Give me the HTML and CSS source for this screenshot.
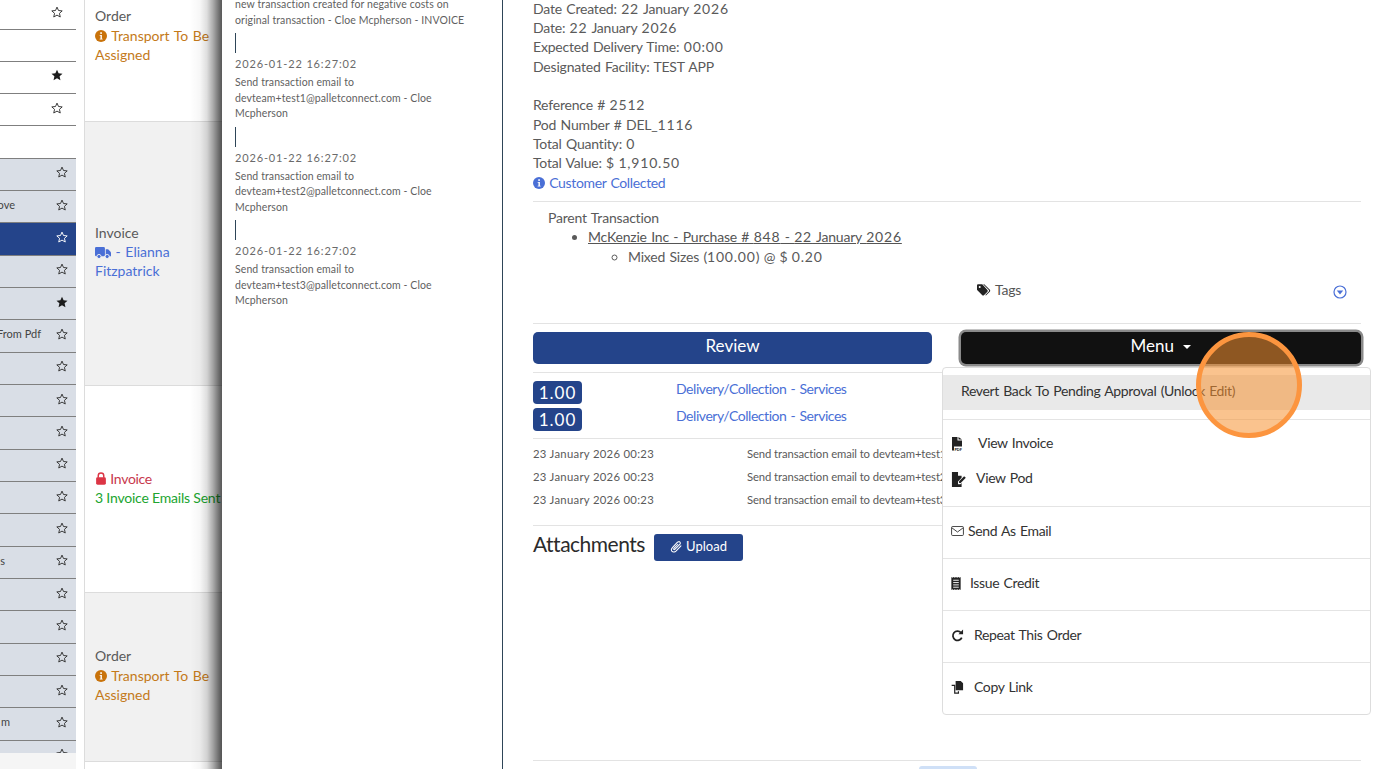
FILE: index.html
```html
<!DOCTYPE html>
<html lang="en">
<head>
<meta charset="utf-8">
<title>Transaction</title>
<link rel="stylesheet" href="styles.css">
</head>
<body>
<svg class="defs" aria-hidden="true">
  <symbol id="star" viewBox="0 0 24 24"><polygon points="12,2.2 15,9 22.4,9.8 16.9,14.7 18.5,22 12,18.2 5.5,22 7.1,14.7 1.6,9.8 9,9" fill="none" stroke="currentColor" stroke-width="1.9" stroke-linejoin="round"/></symbol>
  <symbol id="star-solid" viewBox="0 0 24 24"><polygon points="12,1.5 15.2,8.6 23,9.5 17.2,14.7 18.9,22.5 12,18.5 5.1,22.5 6.8,14.7 1,9.5 8.8,8.6" fill="currentColor"/></symbol>
  <symbol id="info" viewBox="0 0 16 16"><circle cx="8" cy="8" r="8" fill="currentColor"/><rect x="7" y="3" width="2.2" height="2.2" fill="#fff"/><path d="M6.2 6.6h3v5h1v1.2H6.2v-1.2h1.1V7.8H6.2z" fill="#fff"/></symbol>
</svg>

<aside class="list">
  <div class="list-inner">
    <div class="row row-plain"><svg class="star"><use href="#star"/></svg></div>
    <div class="row row-plain"></div>
    <div class="row row-plain"><svg class="star star-dark"><use href="#star-solid"/></svg></div>
    <div class="row row-plain"><svg class="star"><use href="#star"/></svg></div>
    <div class="row row-plain"></div>
    <div class="row row-grey"><svg class="star"><use href="#star"/></svg></div>
    <div class="row row-grey"><span class="row-text end-ove">ove</span><svg class="star"><use href="#star"/></svg></div>
    <div class="row row-grey row-active"><svg class="star"><use href="#star"/></svg></div>
    <div class="row row-grey"><svg class="star"><use href="#star"/></svg></div>
    <div class="row row-grey"><svg class="star star-dark"><use href="#star-solid"/></svg></div>
    <div class="row row-grey"><span class="row-text end-pdf">From Pdf</span><svg class="star"><use href="#star"/></svg></div>
    <div class="row row-grey"><svg class="star"><use href="#star"/></svg></div>
    <div class="row row-grey"><svg class="star"><use href="#star"/></svg></div>
    <div class="row row-grey"><svg class="star"><use href="#star"/></svg></div>
    <div class="row row-grey"><svg class="star"><use href="#star"/></svg></div>
    <div class="row row-grey"><svg class="star"><use href="#star"/></svg></div>
    <div class="row row-grey"><svg class="star"><use href="#star"/></svg></div>
    <div class="row row-grey"><span class="row-text end-s">s</span><svg class="star"><use href="#star"/></svg></div>
    <div class="row row-grey"><svg class="star"><use href="#star"/></svg></div>
    <div class="row row-grey"><svg class="star"><use href="#star"/></svg></div>
    <div class="row row-grey"><svg class="star"><use href="#star"/></svg></div>
    <div class="row row-grey"><svg class="star"><use href="#star"/></svg></div>
    <div class="row row-grey"><span class="row-text end-m">m</span><svg class="star"><use href="#star"/></svg></div>
    <div class="row row-grey"><svg class="star"><use href="#star"/></svg></div>
  </div>
  <div class="list-foot"></div>
</aside>

<section class="types">
  <div class="type type-a">
    <div>Order</div>
    <div class="orange"><svg class="ico"><use href="#info"/></svg> Transport To Be Assigned</div>
  </div>
  <div class="type type-b alt">
    <div>Invoice</div>
    <div class="blue"><svg class="ico-truck" viewBox="0 0 20 16"><rect x="0" y="1" width="12.4" height="11.6" rx="1.6" fill="currentColor"/><path d="M13.4 4h3l3.6 3.8V12.600h-6.600z" fill="currentColor"/><circle cx="5" cy="13" r="2.600" fill="currentColor" stroke="#f1f1f1" stroke-width="1.200"/><circle cx="15.200" cy="13" r="2.600" fill="currentColor" stroke="#f1f1f1" stroke-width="1.200"/></svg> - Elianna Fitzpatrick</div>
  </div>
  <div class="type type-c">
    <div class="red"><svg class="ico-lock" viewBox="0 0 14 16"><rect x="1" y="6.600" width="12" height="9" rx="1.800" fill="currentColor"/><path d="M3.600 7V4.600a3.400 3.400 0 0 1 6.800 0V7" fill="none" stroke="currentColor" stroke-width="1.800"/></svg> Invoice</div>
    <div class="green nowrap">3 Invoice Emails Sent</div>
  </div>
  <div class="type type-d alt">
    <div>Order</div>
    <div class="orange"><svg class="ico"><use href="#info"/></svg> Transport To Be Assigned</div>
  </div>
</section>

<section class="history">
  <p class="note">new transaction created for negative costs on original transaction - Cloe Mcpherson - INVOICE</p>
  <div class="tick"></div>
  <div class="stamp">2026-01-22 16:27:02</div>
  <p class="note">Send transaction email to devteam+test1@palletconnect.com - Cloe Mcpherson</p>
  <div class="tick"></div>
  <div class="stamp">2026-01-22 16:27:02</div>
  <p class="note">Send transaction email to devteam+test2@palletconnect.com - Cloe Mcpherson</p>
  <div class="tick"></div>
  <div class="stamp">2026-01-22 16:27:02</div>
  <p class="note">Send transaction email to devteam+test3@palletconnect.com - Cloe Mcpherson</p>
</section>

<main class="detail">
  <div class="facts">
    <div>Date Created: <span class="n">22</span> January <span class="n">2026</span></div>
    <div>Date: <span class="n">22</span> January <span class="n">2026</span></div>
    <div>Expected Delivery Time: <span class="n">00:00</span></div>
    <div>Designated Facility: TEST APP</div>
    <div class="blank"></div>
    <div>Reference # <span class="n">2512</span></div>
    <div>Pod Number # DEL_<span class="n">1116</span></div>
    <div>Total Quantity: <span class="n">0</span></div>
    <div>Total Value: $ <span class="n">1,910.50</span></div>
    <div class="blue tight"><svg class="ico"><use href="#info"/></svg> Customer Collected</div>
  </div>
  <div class="rule rule-facts"></div>
  <div class="parent">
    <div>Parent Transaction</div>
    <ul class="parent-list">
      <li><a class="parent-link">McKenzie Inc - Purchase # <span class="n">848</span> - <span class="n">22</span> January <span class="n">2026</span></a>
        <ul class="parent-sub"><li>Mixed Sizes (<span class="n">100.00</span>) @ $ <span class="n">0.20</span></li></ul>
      </li>
    </ul>
  </div>
  <div class="tags">
    <span class="tags-label"><svg class="ico-tags" viewBox="0 0 18 15"><path d="M0 1.600v5.200c0 .4.200.8.500 1.100l6.300 6.300c.600.600 1.500.600 2.100 0l4.500-4.500c.600-.600.600-1.500 0-2.100L7.100.500C6.800.200 6.400 0 6 0H1.600C.700 0 0 .700 0 1.600zM3.500 2.200a1.300 1.300 0 1 1 0 2.600 1.300 1.300 0 0 1 0-2.600z" fill="#222" fill-rule="evenodd"/><path d="M9.300 0l6.900 6.900c1 1 1 1.900.2 2.800l-4.900 4.900-.8-.8 4.500-4.500c.5-.6.500-1.100 0-1.700L7.900 0z" fill="#222"/></svg> Tags</span>
    <svg class="ico-chev" viewBox="0 0 14 14"><circle cx="7" cy="7" r="6" fill="none" stroke="currentColor" stroke-width="1.200"/><path d="M3.800 5.600h6.400L7 9.400z" fill="currentColor"/></svg>
  </div>
  <div class="rule rule-tags"></div>
  <div class="actions">
    <button class="btn btn-review">Review</button>
    <button class="btn btn-menu">Menu <span class="caret"></span></button>
  </div>
  <div class="rule rule-actions"></div>
  <div class="lines">
    <div class="line"><span class="badge">1.00</span><a class="blue link">Delivery/Collection - Services</a></div>
    <div class="line"><span class="badge">1.00</span><a class="blue link">Delivery/Collection - Services</a></div>
  </div>
  <div class="rule rule-lines"></div>
  <div class="logs">
    <div class="log"><span>23 January 2026 00:23</span><span class="log-msg">Send transaction email to devteam+test1@palletconnect.com</span></div>
    <div class="log"><span>23 January 2026 00:23</span><span class="log-msg">Send transaction email to devteam+test2@palletconnect.com</span></div>
    <div class="log"><span>23 January 2026 00:23</span><span class="log-msg">Send transaction email to devteam+test3@palletconnect.com</span></div>
  </div>
  <div class="rule rule-logs"></div>
  <div class="attach">
    <h2 class="attach-title">Attachments</h2>
    <button class="btn-upload"><svg class="ico-clip" viewBox="0 0 14 14"><path d="M11.800 6.300 6.700 11.700c-1.500 1.500-3.500 1.600-4.500.6s-.8-2.900.6-4.400l5-5.300c1-1 2.200-1.100 2.900-.4s.6 1.900-.4 2.900L5.500 9.900c-.5.500-1.100.6-1.400.3s-.2-.9.300-1.400l4-4.200" fill="none" stroke="#fff" stroke-width="1.100" stroke-linecap="round"/></svg> Upload</button>
  </div>
  <div class="rule rule-end"></div>
  <div class="pill"></div>

  <nav class="menu">
    <div class="menu-top"><div class="menu-item menu-hl">Revert Back To Pending Approval (Unlock Edit)</div></div>
    <div class="menu-sec menu-view">
      <div class="menu-item"><svg class="mi mi-pdf" viewBox="0 0 12 14"><path d="M1 0h5.500v3.500H11v6H1z" fill="#222"/><path d="M7.500 0 11 2.500H7.500z" fill="#222"/><path d="M1 9h2v4.500H1z" fill="#222"/><text x="3.400" y="13.500" class="pdf-mark">PDF</text></svg><span>View Invoice</span></div>
      <div class="menu-item"><svg class="mi mi-sign" viewBox="0 0 16 16"><path d="M1 0h6.500v4h3.800v2L7.500 10v3H10l1.300-1.300V16H1z" fill="#222" /><path d="M8.600 9.800 14 4.400l1.800 1.800-5.400 5.400H8.600z" fill="#222"/></svg><span>View Pod</span></div>
    </div>
    <div class="menu-sec"><div class="menu-item"><svg class="mi mi-mail" viewBox="0 0 14 11"><rect x=".5" y=".5" width="13" height="10" rx="1.200" fill="none" stroke="#333" stroke-width="1"/><path d="M.8 2 7 6.600 13.200 2" fill="none" stroke="#333" stroke-width="1"/></svg><span>Send As Email</span></div></div>
    <div class="menu-sec"><div class="menu-item"><svg class="mi mi-rec" viewBox="0 0 10 14"><path d="M0 0l1.200.8L2.500 0l1.200.8L5 0l1.300.8L7.500 0l1.300.8L10 0v14l-1.200-.8-1.300.8-1.200-.8L5 14l-1.300-.8-1.200.8-1.300-.8L0 14z" fill="#222"/><path d="M2 3.500h6M2 6h6M2 8.500h6M2 11h6" stroke="#fff" stroke-width="1"/></svg><span>Issue Credit</span></div></div>
    <div class="menu-sec"><div class="menu-item"><svg class="mi mi-redo" viewBox="0 0 14 14"><path d="M11.600 9.300A5 5 0 1 1 10.700 3.800" fill="none" stroke="#222" stroke-width="1.900"/><path d="M13 .6v5H8z" fill="#222"/></svg><span>Repeat This Order</span></div></div>
    <div class="menu-sec"><div class="menu-item"><svg class="mi mi-copy" viewBox="0 0 14 14"><path d="M5 0h5.500L13 2.500V10H5z" fill="#222"/><path d="M.7 4.700h3.300V13H8v-2" fill="none" stroke="#222" stroke-width="1.300"/></svg><span>Copy Link</span></div></div>
  </nav>
</main>

<div class="spot"></div>
</body>
</html>
```

FILE: styles.css
```css
* { box-sizing: border-box; }
html, body { margin: 0; height: 769px; overflow: hidden; }
body {
  display: flex;
  background: #fff;
  font-family: "Lato", "Open Sans", sans-serif;
  font-size: 14px;
  letter-spacing: -.2px;
  word-spacing: 1px;
  color: #5a5a5a;
  line-height: 19.33px;
  position: relative;
}
.defs { width: 0; height: 0; position: absolute; }
p { margin: 0; }
.n { letter-spacing: .8px; }

/* far-left list */
.list { width: 84px; flex: none; height: 769px; padding-right: 8px; }
.list-inner { height: 753px; overflow: hidden; }
.list-foot { height: 16px; background: #f5f5f5; }
.row {
  height: 32.33px;
  border-bottom: 1px solid #7f7f7f;
  display: flex;
  align-items: center;
  justify-content: flex-end;
  color: #444;
  overflow: hidden;
  font-size: 11px;
  letter-spacing: 0;
  word-spacing: 0;
}
.row:first-child { height: 29.5px; }
.row-plain { background: #fff; padding-right: 13px; padding-bottom: 4px; }
.row-grey { background: #d9dee6; padding-right: 8px; padding-bottom: 4px; }
.row-active { background: #24448a; color: #fff; }
.star { width: 12px; height: 12px; color: #333; flex: none; }
.row-active .star { color: #fff; }
.star-dark { color: #1c1c1c; }
.row-text { white-space: nowrap; }
.end-ove { margin-right: 41px; }
.end-pdf { margin-right: 15px; }
.end-s { margin-right: 51px; }
.end-m { margin-right: 46px; }

/* second column */
.types { width: 138px; flex: none; height: 769px; border-left: 1px solid #dcdcdc; overflow: hidden; letter-spacing: 0; position: relative; }
.types::after {
  content: "";
  position: absolute;
  top: 0;
  bottom: 0;
  right: 0;
  width: 32px;
  background: linear-gradient(to right, rgba(0, 0, 0, 0), rgba(0, 0, 0, .03) 31%, rgba(0, 0, 0, .13) 53%, rgba(0, 0, 0, .33) 72%, rgba(0, 0, 0, .6) 94%, rgba(0, 0, 0, .65));
}
.type { padding: 0 2px 0 10px; display: flex; flex-direction: column; justify-content: center; border-bottom: 1px solid #dcdcdc; }
.type-a { margin-top: -50px; height: 171.5px; }
.type-b { height: 264px; padding-bottom: 3px; }
.type-c { height: 207px; padding-bottom: 1px; }
.type-d { height: 169.5px; padding-bottom: 3px; }
.alt { background: #f1f1f1; }
.nowrap { white-space: nowrap; }
.orange { color: #c47a1a; }
.blue { color: #4a6fd6; }
.red { color: #c8384d; letter-spacing: -.3px; word-spacing: 0; }
.green { color: #20a52f; letter-spacing: -.2px; word-spacing: 0; }
.tight { letter-spacing: -.35px; }
.ico { width: 12px; height: 12px; vertical-align: -1px; }
.orange .ico { color: #c9730b; }
.ico-truck { width: 16px; height: 13px; vertical-align: -2px; }
.ico-lock { width: 12px; height: 13px; vertical-align: -1px; color: #dc3545; }

/* history panel */
.history {
  width: 281px;
  flex: none;
  height: 769px;
  background: #fff;
  border-right: 1px solid #2e4558;
  padding: 0 20px 0 13px;
  overflow: hidden;
  font-size: 10.5px;
  line-height: 15.4px;
  letter-spacing: .1px;
  word-spacing: 0;
}
.note { color: #5f5f5f; }
.note:first-child { margin-top: -2.7px; }
.tick { width: 1px; height: 20px; background: #2e4558; margin-top: 5px; }
.stamp { height: 22.3px; line-height: 21.3px; font-size: 11px; letter-spacing: .85px; color: #6a6a6a; }

/* detail panel */
.detail { flex: 1; min-width: 0; height: 769px; padding: 0 16px 0 30px; background: #fff; position: relative; overflow: hidden; }
.facts { margin-top: -1.3px; height: 194.3px; }
.blank { height: 19.33px; }
.rule { border-top: 1px solid #e3e3e3; height: 1px; }
.rule-facts { margin-top: 8px; }
.parent { margin-top: 6px; padding-left: 15px; height: 59px; }
.parent-list { margin: 0; padding-left: 40px; }
.parent-sub { margin: 0; padding-left: 40px; list-style: circle; }
.parent-link { text-decoration: underline; color: #555; }
.tags { margin-top: 13px; display: flex; align-items: center; height: 20px; padding-left: 444px; }
.tags-label { color: #555; }
.ico-tags { width: 14px; height: 12px; vertical-align: -1px; }
.ico-chev { width: 14px; height: 14px; color: #4a6fd6; margin-left: auto; margin-right: 14px; margin-top: 4px; }
.rule-tags { margin-top: 23px; }
.actions { display: grid; grid-template-columns: 399px 400px; column-gap: 29px; margin-top: 8px; height: 32px; }
.btn { border: 0; border-radius: 5px; color: #fff; font: inherit; font-size: 17px; letter-spacing: 0; padding: 0 0 5px; }
.btn-review { background: #24448a; }
.btn-menu { background: #111; box-shadow: 0 0 0 2.5px #8a8a8a; }
.caret { display: inline-block; width: 0; height: 0; margin-left: 5px; vertical-align: 3px; border-left: 4px solid transparent; border-right: 4px solid transparent; border-top: 4px solid #fff; }
.rule-actions { margin-top: 8px; }
.lines { padding-top: 8px; }
.line { display: grid; grid-template-columns: 143px 1fr; height: 27px; align-items: start; }
.link { letter-spacing: -.45px; margin-top: -2px; }
.badge { width: 49px; height: 23px; border-radius: 4px; background: #24448a; color: #fff; font-size: 17px; line-height: 23px; text-align: center; letter-spacing: 1px; }
.rule-lines { margin-top: 3px; }
.logs { padding-top: 3px; width: 409px; overflow: hidden; }
.log { display: grid; grid-template-columns: 214px 195px; height: 23px; align-items: center; font-size: 11.3px; letter-spacing: .3px; word-spacing: 0; white-space: nowrap; overflow: hidden; }
.log-msg { letter-spacing: -.1px; overflow: hidden; }
.rule-logs { margin-top: 14px; }
.attach { display: flex; align-items: center; gap: 9px; margin-top: 8px; height: 27px; }
.attach-title { margin: 0; font-size: 21px; font-weight: 400; color: #2b2b2b; letter-spacing: -.5px; line-height: 24px; margin-bottom: 8px; }
.btn-upload { width: 89px; height: 27px; border: 0; border-radius: 3px; background: #24448a; color: #fff; font: inherit; font-size: 13px; letter-spacing: 0; padding: 0 0 2px; }
.ico-clip { width: 13px; height: 13px; vertical-align: -2px; }
.rule-end { margin-top: 199px; }
.pill { width: 58px; height: 3px; margin: 5px 0 0 386px; background: #cfe0f7; border-radius: 5px 5px 0 0; }

/* dropdown */
.menu {
  position: absolute;
  left: 439px;
  top: 366.5px;
  width: 428.5px;
  height: 348px;
  background: #fff;
  border: 1px solid #ddd;
  border-radius: 4px;
  color: #333;
  font-size: 14px;
  letter-spacing: -.35px;
}
.menu-top { padding-top: 7.5px; height: 51px; }
.menu-item { display: flex; align-items: center; white-space: nowrap; }
.menu-item span { margin-top: -2px; }
.menu-hl { height: 34.5px; background: #e9e9e9; padding: 0 0 3px 18px; }
.menu-sec { border-top: 1px solid #e4e4e4; height: 52px; padding: 0 8px 2px; display: flex; align-items: center; }
.menu-view { height: 87.5px; display: block; padding-top: 7px; }
.menu-view .menu-item { height: 35px; }
.mi { flex: none; }
.mi-pdf { width: 12px; height: 14px; margin-right: 15px; }
.pdf-mark { font-size: 3.8px; font-weight: 900; fill: #222; letter-spacing: 0; word-spacing: 0; }
.mi-sign { width: 15px; height: 15px; margin-right: 10px; }
.mi-mail { width: 13px; height: 10px; margin-right: 4px; }
.mi-rec { width: 10px; height: 13px; margin-right: 9px; }
.mi-redo { width: 13px; height: 13px; margin-right: 10px; }
.mi-copy { width: 13px; height: 13px; margin-right: 10px; }

/* tutorial highlight */
.spot {
  position: absolute;
  left: 1196px;
  top: 332px;
  width: 106px;
  height: 106px;
  border-radius: 50%;
  border: 5px solid #fc953f;
  background: rgba(245, 145, 50, .55);
  z-index: 5;
}
```
